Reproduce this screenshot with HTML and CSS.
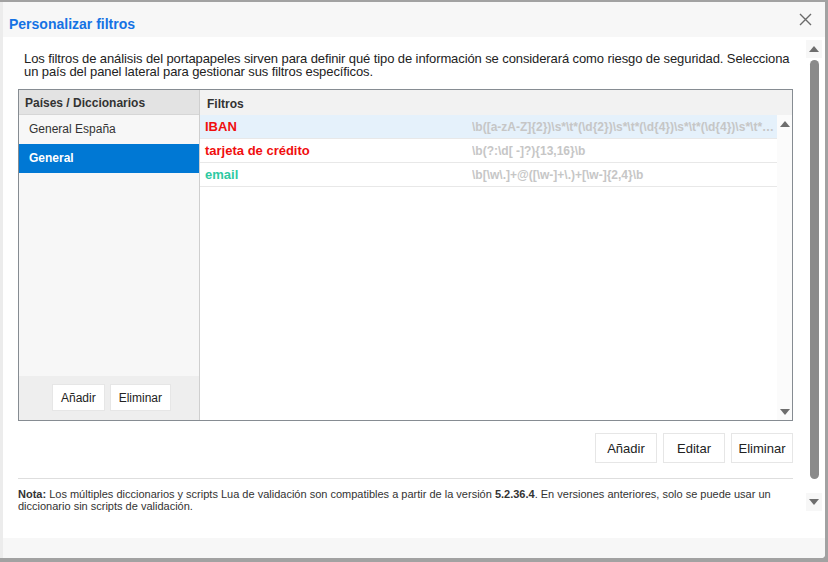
FILE: index.html
```html
<!DOCTYPE html>
<html lang="es">
<head>
    <meta charset="UTF-8">
    <meta name="viewport" content="width=device-width, initial-scale=1.0">
    <title>Personalizar filtros</title>
    <link rel="stylesheet" href="styles.css">
</head>
<body>
    <div class="dialog">
        <div class="dialog-header">
            <h1 class="dialog-title">Personalizar filtros</h1>
            <button class="close-btn" aria-label="Cerrar">
                <svg width="13" height="13" viewBox="0 0 13 13"><path d="M1 1 L12 12 M12 1 L1 12" stroke="#6b6b6b" stroke-width="1.4" fill="none"/></svg>
            </button>
        </div>
        <div class="dialog-body">
            <div class="content">
                <p class="intro">Los filtros de análisis del portapapeles sirven para definir qué tipo de información se considerará como riesgo de seguridad. Selecciona un país del panel lateral para gestionar sus filtros específicos.</p>

                <div class="panel">
                    <div class="side">
                        <div class="side-head">Países / Diccionarios</div>
                        <ul class="side-list">
                            <li>General España</li>
                            <li class="selected">General</li>
                        </ul>
                        <div class="side-actions">
                            <button class="btn btn-small">Añadir</button>
                            <button class="btn btn-small">Eliminar</button>
                        </div>
                    </div>
                    <div class="filters">
                        <div class="filters-head">Filtros</div>
                        <div class="filters-wrap">
                            <div class="filters-list">
                                <div class="filter-row active">
                                    <span class="filter-name red">IBAN</span>
                                    <span class="filter-regex">\b([a-zA-Z]{2})\s*\t*(\d{2})\s*\t*(\d{4})\s*\t*(\d{4})\s*\t*(\d{4})\s*\t*(\d{4})\b</span>
                                </div>
                                <div class="filter-row">
                                    <span class="filter-name red">tarjeta de crédito</span>
                                    <span class="filter-regex">\b(?:\d[ -]?){13,16}\b</span>
                                </div>
                                <div class="filter-row">
                                    <span class="filter-name green">email</span>
                                    <span class="filter-regex">\b[\w\.]+@([\w-]+\.)+[\w-]{2,4}\b</span>
                                </div>
                            </div>
                            <div class="mini-scroll">
                                <span class="arrow up"></span>
                                <span class="arrow down"></span>
                            </div>
                        </div>
                    </div>
                </div>

                <div class="actions">
                    <button class="btn">Añadir</button>
                    <button class="btn">Editar</button>
                    <button class="btn">Eliminar</button>
                </div>

                <p class="note"><b>Nota:</b> Los múltiples diccionarios y scripts Lua de validación son compatibles a partir de la versión <b>5.2.36.4</b>. En versiones anteriores, solo se puede usar un diccionario sin scripts de validación.</p>
            </div>
            <div class="scrollbar">
                <span class="sb-btn"><span class="arrow up"></span></span>
                <span class="sb-thumb"></span>
                <span class="sb-btn"><span class="arrow down"></span></span>
            </div>
        </div>
        <div class="dialog-footer"></div>
    </div>
</body>
</html>
```

FILE: styles.css
```css
*{
    box-sizing: border-box;
    margin: 0;
    padding: 0;
}
body{
    background-color: #a2a2a2;
    font-family: "Liberation Sans", Arial, sans-serif;
    color: #222;
    width: 828px;
    height: 562px;
    overflow: hidden;
}
.dialog{
    margin: 2px 3px 0 0;
    height: 556px;
    background-color: #fff;
    border-left: 3px solid #ececec;
    border-bottom-right-radius: 4px;
    display: flex;
    flex-direction: column;
    overflow: hidden;
}
.dialog-header{
    height: 35px;
    background-color: #f7f7f7;
    display: flex;
    align-items: center;
    justify-content: space-between;
    padding: 0 13px 2px 6px;
}
.dialog-title{
    font-size: 14px;
    font-weight: bold;
    color: #1572e4;
    margin-top: 10px;
}
.close-btn{
    border: none;
    background: none;
    display: flex;
    margin-top: 1px;
}
.dialog-body{
    flex: 1;
    display: flex;
    padding-right: 3px;
}
.content{
    flex: 1;
    min-width: 0;
    padding: 15px 13px 0 15px;
}
.intro{
    font-size: 13px;
    line-height: 13px;
    letter-spacing: -0.1px;
    margin-left: 6px;
    margin-bottom: 11px;
}

/* panel with two lists */
.panel{
    display: flex;
    height: 332px;
    border: 1px solid #868c92;
}
.side{
    width: 181px;
    flex-shrink: 0;
    border-right: 1px solid #cfcfcf;
    display: flex;
    flex-direction: column;
    background-color: #f7f7f7;
}
.side-head{
    height: 25px;
    background-color: #e3e3e3;
    border-bottom: 1px solid #d6d6d6;
    font-size: 12px;
    font-weight: bold;
    color: #333;
    padding: 6px 0 0 6px;
}
.side-list{
    list-style: none;
    flex: 1;
}
.side-list li{
    height: 29px;
    line-height: 29px;
    font-size: 12px;
    color: #333;
    padding-left: 10px;
}
.side-list li.selected{
    background-color: #0078d4;
    color: #fff;
    font-weight: bold;
}
.side-actions{
    height: 44px;
    background-color: #eeeeee;
    display: flex;
    justify-content: center;
    align-items: center;
    gap: 5px;
    padding: 0 0 1px 5px;
}
.filters{
    flex: 1;
    min-width: 0;
    display: flex;
    flex-direction: column;
}
.filters-head{
    height: 25px;
    background-color: #f2f2f2;
    font-size: 12px;
    font-weight: bold;
    color: #333;
    padding: 7px 0 0 7px;
}
.filters-wrap{
    flex: 1;
    display: flex;
}
.filters-list{
    flex: 1;
    min-width: 0;
}
.filter-row{
    display: flex;
    height: 24px;
    align-items: center;
    border-bottom: 1px solid #e8e8e8;
}
.filter-row.active{
    background-color: #e5f1fb;
}
.filter-name{
    width: 272px;
    flex-shrink: 0;
    padding-left: 5px;
    font-size: 13px;
    font-weight: bold;
}
.red{
    color: #f00e0e;
}
.green{
    color: #2ec9a2;
}
.filter-regex{
    flex: 1;
    min-width: 0;
    white-space: nowrap;
    overflow: hidden;
    text-overflow: ellipsis;
    font-size: 12px;
    font-weight: bold;
    color: #c6c6c6;
    padding-right: 2px;
}
.mini-scroll{
    width: 15px;
    display: flex;
    flex-direction: column;
    justify-content: space-between;
    align-items: center;
    padding: 6px 0 5px;
    background-color: #fbfbfb;
}
.arrow{
    width: 0;
    height: 0;
    border-left: 5px solid transparent;
    border-right: 5px solid transparent;
}
.arrow.up{
    border-bottom: 6px solid #6e6e6e;
}
.arrow.down{
    border-top: 6px solid #6e6e6e;
}

/* buttons */
.btn{
    font-family: inherit;
    font-size: 13px;
    color: #222;
    background-color: #fff;
    border: 1px solid #e6e6e6;
    height: 30px;
    width: 62px;
}
.btn-small{
    font-size: 12px;
    height: 27px;
    width: auto;
    padding: 0 8px;
}
.actions{
    display: flex;
    justify-content: flex-end;
    gap: 6px;
    margin-top: 12px;
    padding-bottom: 15px;
    border-bottom: 1px solid #dedede;
}
.note{
    font-size: 11px;
    line-height: 12px;
    color: #333;
    margin-top: 9px;
}

/* outer scrollbar */
.scrollbar{
    width: 16px;
    flex-shrink: 0;
    display: flex;
    flex-direction: column;
    align-items: center;
    padding: 3px 0 27px;
}
.sb-btn{
    width: 16px;
    height: 18px;
    display: flex;
    align-items: center;
    justify-content: center;
    background-color: #f7f7f7;
}
.sb-thumb{
    flex: 1;
    width: 9px;
    background-color: #8a8a8a;
    border-radius: 5px;
    margin: 2px 0 14px;
}
.dialog-footer{
    height: 20px;
    background-color: #f7f7f7;
}
```
